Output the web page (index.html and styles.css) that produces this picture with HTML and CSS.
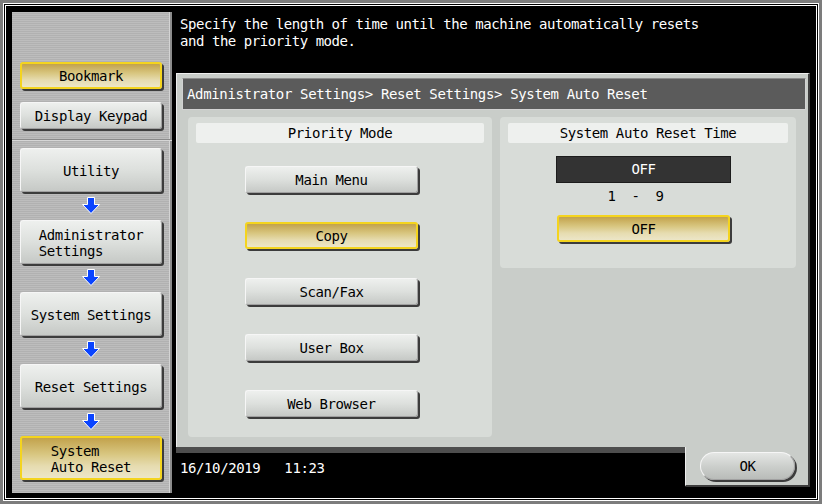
FILE: index.html
```html
<!doctype html>
<html>
  <head>
    <title>System Auto Reset</title>
    <meta http-equiv="Content-Type" content="text/html; charset=utf-8" />
    <link rel="stylesheet" href="styles.css">
  </head>
  <body>
    <div class="screen">
      <aside class="side">
        <div class="side-top">
          <div class="btn btn-sel side-btn">Bookmark</div>
          <div class="btn side-btn">Display Keypad</div>
        </div>
        <nav class="side-nav">
          <div class="btn nav-btn">Utility</div>
          <svg class="arrow" width="18" height="17" viewBox="0 0 18 17"><path d="M5.5 0.5H12.5V7.5H17.5L9 16.5L0.5 7.5H5.5Z" fill="#0a44ff" stroke="#fff" stroke-width="1"/></svg>
          <div class="btn nav-btn"><span class="lines">Administrator<br>Settings</span></div>
          <svg class="arrow" width="18" height="17" viewBox="0 0 18 17"><path d="M5.5 0.5H12.5V7.5H17.5L9 16.5L0.5 7.5H5.5Z" fill="#0a44ff" stroke="#fff" stroke-width="1"/></svg>
          <div class="btn nav-btn">System Settings</div>
          <svg class="arrow" width="18" height="17" viewBox="0 0 18 17"><path d="M5.5 0.5H12.5V7.5H17.5L9 16.5L0.5 7.5H5.5Z" fill="#0a44ff" stroke="#fff" stroke-width="1"/></svg>
          <div class="btn nav-btn">Reset Settings</div>
          <svg class="arrow" width="18" height="17" viewBox="0 0 18 17"><path d="M5.5 0.5H12.5V7.5H17.5L9 16.5L0.5 7.5H5.5Z" fill="#0a44ff" stroke="#fff" stroke-width="1"/></svg>
          <div class="btn btn-sel nav-btn"><span class="lines">System<br>Auto Reset</span></div>
        </nav>
      </aside>

      <main class="main">
        <p class="msg">Specify the length of time until the machine automatically resets<br>and the priority mode.</p>

        <section class="panel">
          <div class="crumb">Administrator Settings&gt; Reset Settings&gt; System Auto Reset</div>
          <div class="cols">
            <div class="box box-left">
              <div class="box-head">Priority Mode</div>
              <div class="opts">
                <div class="btn opt">Main Menu</div>
                <div class="btn btn-sel opt">Copy</div>
                <div class="btn opt">Scan/Fax</div>
                <div class="btn opt">User Box</div>
                <div class="btn opt">Web Browser</div>
              </div>
            </div>
            <div class="box box-right">
              <div class="box-head">System Auto Reset Time</div>
              <div class="value">OFF</div>
              <div class="range">1  -  9</div>
              <div class="btn btn-sel off">OFF</div>
            </div>
          </div>
        </section>

        <footer class="foot">
          <div class="clock">16/10/2019   11:23</div>
          <div class="ok-cell"><div class="btn ok">OK</div></div>
        </footer>
      </main>
    </div>
  </body>
</html>
```

FILE: styles.css
```css
* {
  margin: 0px;
  padding: 0px;
  box-sizing: border-box;
}
body {
  width: 822px;
  height: 504px;
  overflow: hidden;
  background-color: #7c7c7c;
  font-family: "DejaVu Sans Mono", "Liberation Mono", monospace;
  font-size: 14px;
  letter-spacing: -0.4px;
  color: #000;
}
.screen {
  margin: 3px;
  width: 816px;
  height: 498px;
  border: 3px double #fff;
  background-color: #000;
  padding: 6px 6px 5px 6px;
  display: grid;
  grid-template-columns: 160px 1fr;
  column-gap: 4px;
}

/* left column */
.side {
  display: flex;
  flex-direction: column;
  background: repeating-linear-gradient(#bdbdbd 0px, #bdbdbd 1px, #b1b1b1 1px, #b1b1b1 2px);
  box-shadow: inset -2px 0 0 #8c8c8c, inset -3px 0 0 #d4d4d4;
}
.side-top {
  display: flex;
  flex-direction: column;
  gap: 13px;
  padding: 50px 0 10px 8px;
  border-bottom: 1px solid #8a8a8a;
  box-shadow: 0 1px 0 #d6d6d6;
}
.side-btn {
  width: 142px;
  height: 27px;
}
.side-nav {
  display: flex;
  flex-direction: column;
  align-items: center;
  padding: 8px 10px 0 8px;
}
.nav-btn {
  width: 142px;
  height: 44px;
  line-height: 16px;
  padding-top: 2px;
}
.lines {
  display: inline-block;
  text-align: left;
}
.arrow {
  display: block;
  margin: 5px 0 6px 0;
}

/* buttons */
.btn {
  display: flex;
  align-items: center;
  justify-content: center;
  background: linear-gradient(#eef0ee, #dde0dd 50%, #c6c9c6);
  border: 1px solid;
  border-color: #f6f6f6 #a0a0a0 #a0a0a0 #f6f6f6;
  border-radius: 3px;
  box-shadow: 2px 2px 0 #3c3c3c;
  white-space: nowrap;
}
.btn-sel {
  background: linear-gradient(#c2a24c, #d8c680 40%, #e6dcb0 70%, #ece6c8);
  border: 2px solid #f4d41e;
}

/* right column */
.main {
  display: flex;
  flex-direction: column;
}
.msg {
  height: 61px;
  padding: 4px 0 0 4px;
  line-height: 17px;
  letter-spacing: -0.45px;
  color: #fff;
}
.panel {
  height: 374px;
  background-color: #c9cdc9;
  border-top: 1px solid #eeeeee;
  border-left: 1px solid #eeeeee;
  border-right: 2px solid #3c3c3c;
  padding: 4px 2px 0 5px;
}
.crumb {
  height: 32px;
  line-height: 30px;
  padding-left: 4px;
  background-color: #5b5b5b;
  border: 1px solid;
  border-color: #8a8a8a #d2d2d2 #d2d2d2 #d2d2d2;
  color: #fff;
  letter-spacing: -0.35px;
}
.cols {
  display: flex;
  align-items: flex-start;
  gap: 8px;
  margin: 7px 10px 0 6px;
}
.box {
  background-color: #d8dcd8;
  border-radius: 4px;
  padding: 6px 8px 0 8px;
}
.box-left {
  width: 304px;
  height: 320px;
}
.box-right {
  width: 296px;
  height: 151px;
}
.box-head {
  height: 20px;
  line-height: 20px;
  text-align: center;
  background-color: #eef0ee;
  border-radius: 2px;
}
.opts {
  display: flex;
  flex-direction: column;
  gap: 29px;
  padding: 23px 0 0 49px;
}
.opt {
  width: 173px;
  height: 27px;
}
.value {
  width: 175px;
  height: 27px;
  margin: 13px 0 0 48px;
  line-height: 25px;
  text-align: center;
  color: #fff;
  background-color: #333333;
  border: 1px solid #1c1c1c;
}
.range {
  width: 175px;
  margin: 5px 0 0 40px;
  line-height: 17px;
  text-align: center;
  white-space: pre;
}
.off {
  width: 173px;
  height: 27px;
  margin: 10px 0 0 49px;
}

/* bottom row */
.foot {
  flex: 1;
  display: flex;
  align-items: flex-start;
}
.clock {
  flex: 1;
  align-self: stretch;
  border-top: 6px solid #4e4e4e;
  padding: 7px 0 0 4px;
  line-height: 17px;
  color: #fff;
  white-space: pre;
}
.ok-cell {
  width: 125px;
  height: 40px;
  background-color: #c9cdc9;
  border-left: 1px solid #eeeeee;
  border-right: 2px solid #3c3c3c;
  border-bottom: 2px solid #3c3c3c;
  border-bottom-left-radius: 2px;
  padding: 5px 0 0 14px;
}
.ok {
  width: 95px;
  height: 28px;
  border-radius: 14px;
  background: linear-gradient(#e4e6e4, #c8cbc8 60%, #b9bcb9);
}
```
